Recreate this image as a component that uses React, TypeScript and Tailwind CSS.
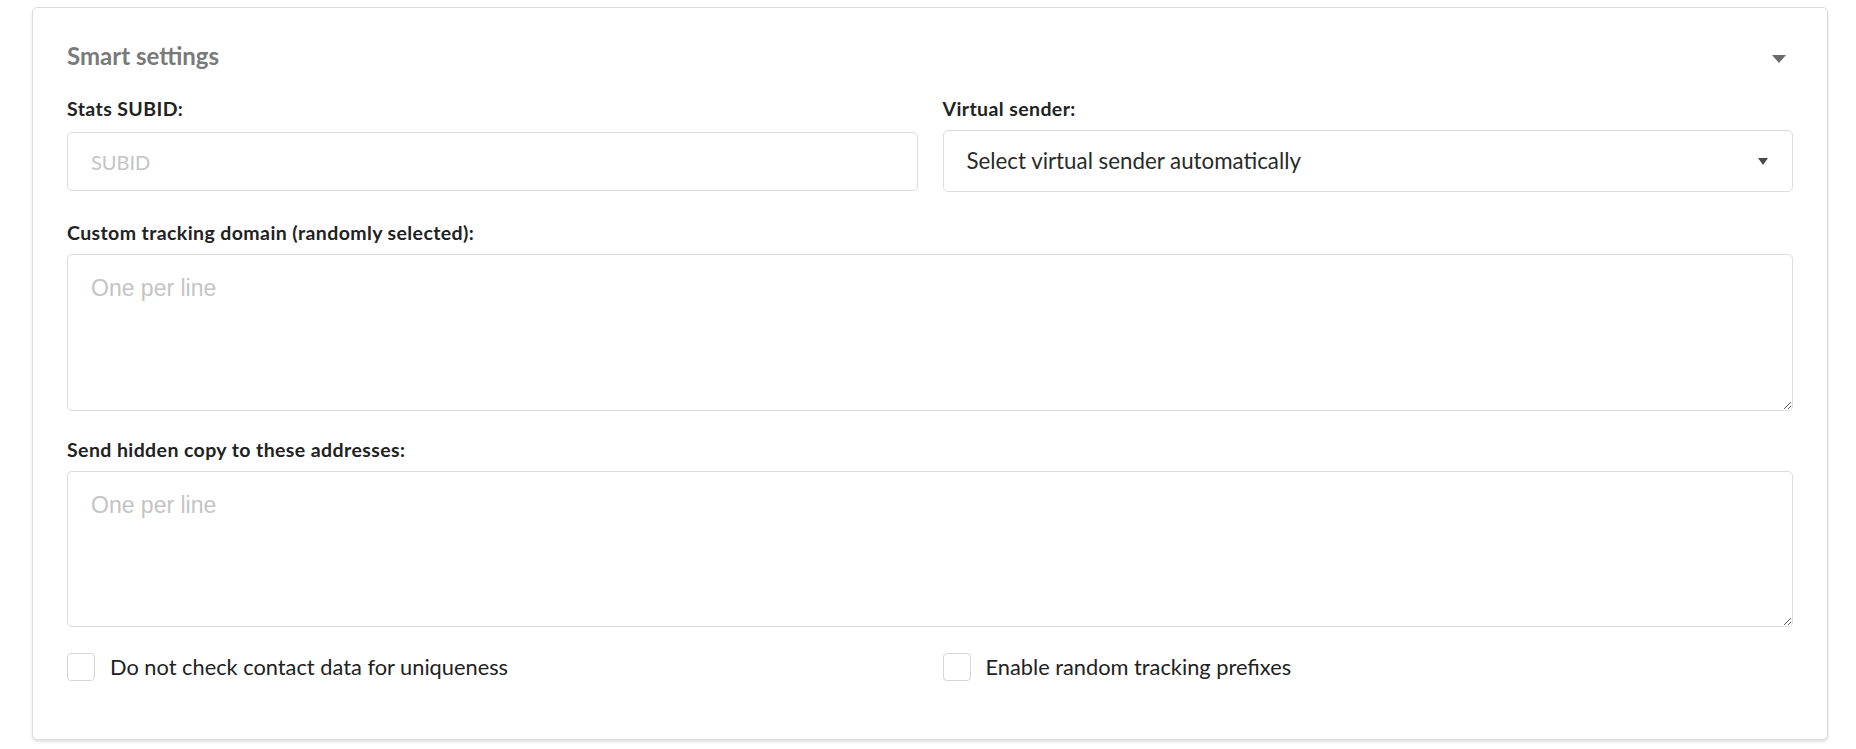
import React from 'react';

const labelCls = "block text-[19.5px] leading-[21px] tracking-[0.4px] font-bold text-[#222] mb-[11px]";

const Field: React.FC<{ label: string; children: React.ReactNode; className?: string }> = ({ label, children, className }) => (
  <div className={className}>
    <label className={labelCls}>{label}</label>
    {children}
  </div>
);

const Check: React.FC<{ label: string }> = ({ label }) => (
  <label className="flex items-center gap-[15px] cursor-pointer">
    <input type="checkbox" className="appearance-none w-[28px] h-[28px] rounded-[4px] border border-[#d6d6d6] bg-white shrink-0" />
    <span className="text-[21.8px] leading-[28px] text-[#222]">{label}</span>
  </label>
);

const areaCls =
  "block w-full px-[23px] py-[16px] rounded-[5px] border border-[#dcdcdc] [font-family:'Liberation_Sans',Arial,sans-serif] text-[23px] leading-[1.5] placeholder:text-[#c4c4c4] outline-none";

export default function App() {
  return (
    <div className="min-h-screen bg-white pt-[7px] pl-[32px] pr-[28px] font-['Lato','Noto_Sans',sans-serif]">
      <div className="bg-white border border-[#dcdcdc] rounded-[5px] shadow-[0_2px_3px_rgba(0,0,0,0.12)] px-[34px] pt-[34px] pb-[58px]">
        {/* Header */}
        <div className="flex items-center justify-between mb-[28px]">
          <h3 className="text-[24px] leading-[28px] font-bold text-[#7a7a7a]">Smart settings</h3>
          <svg width="14" height="8" viewBox="0 0 14 8" className="mr-[7px] mt-[6px]">
            <path d="M0 0 L14 0 L7 8 Z" fill="#6b6b6b" />
          </svg>
        </div>

        {/* Row 1 */}
        <div className="grid grid-cols-2 gap-x-[25px] mb-[30px]">
          <Field label="Stats SUBID:">
            <input
              type="text"
              placeholder="SUBID"
              className="w-full h-[59px] mt-[2px] px-[23px] rounded-[5px] border border-[#dcdcdc] text-[20px] text-[#333] placeholder:text-[#c4c4c4] outline-none"
            />
          </Field>
          <Field label="Virtual sender:">
            <div className="relative mt-[1px]">
              <select className="appearance-none w-full h-[62px] px-[23px] rounded-[5px] border border-[#dcdcdc] bg-white text-[22.3px] text-[#2a2a2a] outline-none">
                <option>Select virtual sender automatically</option>
              </select>
              <svg width="10" height="7" viewBox="0 0 10 7" className="absolute right-[25px] top-[28px] pointer-events-none">
                <path d="M0 0 L10 0 L5 7 Z" fill="#4a4a4a" />
              </svg>
            </div>
          </Field>
        </div>

        {/* Custom tracking */}
        <Field label="Custom tracking domain (randomly selected):" className="mb-[28px]">
          <textarea placeholder="One per line" className={`${areaCls} h-[157px]`} />
        </Field>

        {/* Hidden copy */}
        <Field label="Send hidden copy to these addresses:" className="mb-[26px]">
          <textarea placeholder="One per line" className={`${areaCls} h-[156px]`} />
        </Field>

        {/* Checkboxes */}
        <div className="grid grid-cols-2 gap-x-[25px]">
          <Check label="Do not check contact data for uniqueness" />
          <Check label="Enable random tracking prefixes" />
        </div>
      </div>
    </div>
  );
}
